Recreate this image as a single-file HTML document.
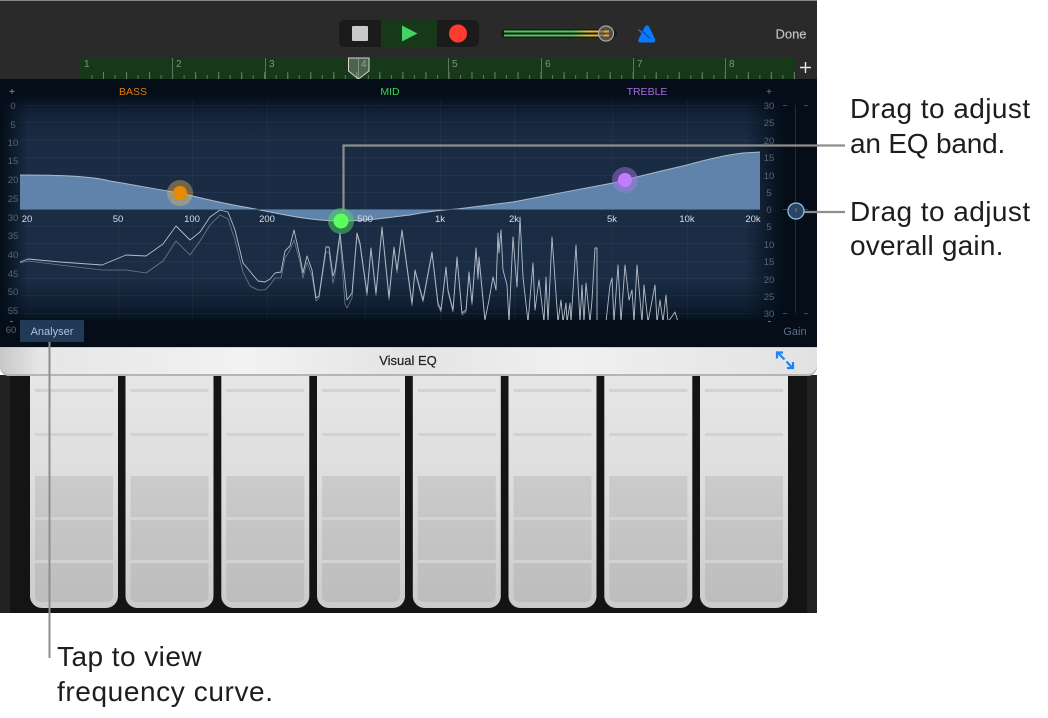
<!DOCTYPE html>
<html><head><meta charset="utf-8"><style>
html,body{margin:0;padding:0;background:#fff;width:1048px;height:718px;overflow:hidden}
svg{display:block;font-family:"Liberation Sans",sans-serif}
.l{font-size:9.5px;fill:#566679;text-anchor:middle}
.f{font-size:9.5px;fill:#d5dde6;text-anchor:middle}
.c{font-size:28px;fill:#1d1d1f;letter-spacing:.45px}
.r{font-size:10px;fill:#7f927f}
</style></head><body>
<svg width="1048" height="718" viewBox="0 0 1048 718" xmlns="http://www.w3.org/2000/svg">
<defs>
<linearGradient id="g1" x1="0" y1="0" x2="0" y2="1"><stop offset="0" stop-color="#050e1a"/><stop offset=".09" stop-color="#14243a"/><stop offset=".2" stop-color="#1a2c43"/><stop offset=".8" stop-color="#1a2d45"/><stop offset=".92" stop-color="#0f1e30"/><stop offset="1" stop-color="#040d18"/></linearGradient>
<linearGradient id="gl" x1="0" x2="1" y1="0" y2="0"><stop offset="0" stop-color="#040d18"/><stop offset="1" stop-color="#040d18" stop-opacity="0"/></linearGradient>
<linearGradient id="gr" x1="0" x2="1" y1="0" y2="0"><stop offset="0" stop-color="#040d18" stop-opacity="0"/><stop offset="1" stop-color="#040d18"/></linearGradient>
<linearGradient id="bar" x1="0" x2="1" y1="0" y2="0"><stop offset="0" stop-color="#c8c8c8"/><stop offset=".05" stop-color="#e6e6e6"/><stop offset=".2" stop-color="#ededed"/><stop offset=".3" stop-color="#f2f2f2"/><stop offset=".5" stop-color="#e4e4e4"/><stop offset=".7" stop-color="#f0f0f0"/><stop offset="1" stop-color="#e2e2e2"/></linearGradient>
<linearGradient id="k" x1="0" x2="0" y1="0" y2="1"><stop offset="0" stop-color="#e6e6e6"/><stop offset=".45" stop-color="#dedede"/><stop offset="1" stop-color="#cbcbcb"/></linearGradient>
<linearGradient id="ki" x1="0" x2="0" y1="0" y2="1"><stop offset="0" stop-color="#cbcbcb"/><stop offset="1" stop-color="#bdbdbd"/></linearGradient>
<linearGradient id="vol" x1="0" x2="1" y1="0" y2="0"><stop offset="0" stop-color="#46c95c"/><stop offset=".68" stop-color="#4ccb5c"/><stop offset=".85" stop-color="#e8c21e"/><stop offset="1" stop-color="#efaa1a"/></linearGradient>
<clipPath id="sp"><rect x="20" y="190" width="740" height="130"/></clipPath>
<filter id="soft" x="-5%" y="-5%" width="110%" height="110%"><feGaussianBlur stdDeviation=".25"/></filter>
<g id="key">
<path d="M0 0H88V221a12 12 0 0 1-12 12H12a12 12 0 0 1-12-12Z" fill="url(#k)"/>
<rect x="5" y="14" width="78" height="3" fill="#d2d2d2"/>
<rect x="5" y="58" width="78" height="3" fill="#d2d2d2"/>
<path d="M5 101H83V221a6 6 0 0 1-6 6H11a6 6 0 0 1-6-6Z" fill="url(#ki)"/>
<rect x="5" y="142" width="78" height="3" fill="#d3d3d3"/>
<rect x="5" y="185" width="78" height="3" fill="#d3d3d3"/>
</g>
</defs>

<!-- top bar -->
<rect x="0" y="0" width="817" height="80" fill="#2a2a2a"/>
<rect x="0" y="0" width="817" height="1" fill="#8a8a8a"/>

<!-- transport -->
<rect x="339" y="20" width="140" height="27" rx="5" fill="#1b1b1b"/>
<rect x="381" y="20" width="56" height="27" fill="#17391a"/>
<rect x="352" y="26" width="16" height="15" rx="1" fill="#c9c9c9"/>
<path d="M402 25.500L417.500 33.500L402 41.500Z" fill="#44d262"/>
<circle cx="458" cy="33.500" r="9" fill="#ff3b30"/>

<!-- volume -->
<rect x="501" y="29" width="116" height="9" rx="4.500" fill="#1a1a1a"/>
<rect x="504" y="30.500" width="100" height="2" fill="url(#vol)"/>
<rect x="504" y="34.500" width="100" height="2" fill="url(#vol)"/>
<circle cx="606" cy="33.500" r="7.500" fill="#6a6a6a" fill-opacity=".65" stroke="#a8a8a8" stroke-width="1.200"/>
<rect x="604" y="30.500" width="5" height="2" fill="#efaa1a"/>
<rect x="604" y="34.500" width="5" height="2" fill="#efaa1a"/>

<!-- metronome -->
<path d="M645 26.500Q647 24 649 26.500L655 39Q656 42.500 653 42.500H640.500Q637.500 42.500 638.500 39.500L642 32.500Z" fill="#0a7aff"/>
<path d="M641 30L650 38.500" stroke="#0d4a99" stroke-width="1.300"/>
<path d="M638.500 29.500L646.500 37" stroke="#0a7aff" stroke-width="1.200"/>

<text x="791" y="38.500" font-size="13" fill="#c4c4c4" text-anchor="middle" stroke="#c4c4c4" stroke-width=".15">Done</text>

<!-- ruler -->
<rect x="80" y="58" width="715" height="21" fill="#17391a"/>
<line x1="91.500" x2="795" y1="77" y2="77" stroke="#5f7560" stroke-width="4" stroke-dasharray="1 10.515"/>
<line x1="103" x2="795" y1="75.500" y2="75.500" stroke="#6a7f6b" stroke-width="7" stroke-dasharray="1 22.030"/>
<g stroke="#5f7560" stroke-width="1">
<line x1="172.500" x2="172.500" y1="58" y2="79"/><line x1="265.500" x2="265.500" y1="58" y2="79"/><line x1="448.500" x2="448.500" y1="58" y2="79"/><line x1="541.500" x2="541.500" y1="58" y2="79"/><line x1="633.500" x2="633.500" y1="58" y2="79"/><line x1="725.500" x2="725.500" y1="58" y2="79"/>
</g>
<text class="r" x="84" y="67">1</text><text class="r" x="176" y="67">2</text><text class="r" x="269" y="67">3</text><text class="r" x="361" y="67">4</text><text class="r" x="452" y="67">5</text><text class="r" x="545" y="67">6</text><text class="r" x="637" y="67">7</text><text class="r" x="729" y="67">8</text>
<path d="M348.500 58H369V71L358.500 79L348.500 71Z" fill="#c8c8c8" fill-opacity=".3" stroke="#d5d5d5" stroke-width="1"/>
<line x1="358.500" x2="358.500" y1="58" y2="79" stroke="#d5d5d5" stroke-opacity=".4"/>
<path d="M800 67.500H811M805.500 62V73" stroke="#e8e8e8" stroke-width="1.400"/>

<!-- EQ panel -->
<rect x="0" y="79" width="817" height="268" fill="#040d18"/>
<rect x="0" y="95" width="817" height="230" fill="url(#g1)"/>
<g stroke="#fff" stroke-opacity=".04" stroke-width="1">
<line x1="20" x2="760" y1="105.500" y2="105.500"/><line x1="20" x2="760" y1="122.500" y2="122.500"/><line x1="20" x2="760" y1="140.500" y2="140.500"/><line x1="20" x2="760" y1="157.500" y2="157.500"/><line x1="20" x2="760" y1="175.500" y2="175.500"/><line x1="20" x2="760" y1="192.500" y2="192.500"/><line x1="20" x2="760" y1="226.500" y2="226.500"/><line x1="20" x2="760" y1="243.500" y2="243.500"/><line x1="20" x2="760" y1="261.500" y2="261.500"/><line x1="20" x2="760" y1="278.500" y2="278.500"/><line x1="20" x2="760" y1="295.500" y2="295.500"/><line x1="20" x2="760" y1="313.500" y2="313.500"/>
<line x1="118.500" x2="118.500" y1="100" y2="320"/><line x1="192.500" x2="192.500" y1="100" y2="320"/><line x1="267.500" x2="267.500" y1="100" y2="320"/><line x1="365.500" x2="365.500" y1="100" y2="320"/><line x1="440.500" x2="440.500" y1="100" y2="320"/><line x1="514.500" x2="514.500" y1="100" y2="320"/><line x1="612.500" x2="612.500" y1="100" y2="320"/><line x1="687.500" x2="687.500" y1="100" y2="320"/>
</g>
<rect x="0" y="95" width="28" height="230" fill="url(#gl)"/>
<rect x="745" y="95" width="40" height="230" fill="url(#gr)"/>
<rect x="785" y="95" width="32" height="230" fill="#040d18"/>

<!-- curve -->
<path d="M20 175C60 175 90 176 110 181C135 185 160 190 180 193C205 199 225 204 250 208C280 214 310 221 340 221C365 221 385 218 410 215C425 212 440 210 457 209C475 207 495 204 513 202C545 196 580 189 613 183C640 176 665 170 687 165C705 160 725 155 743 153L760 152V209H20Z" fill="#5f83aa"/>
<path d="M20 175C60 175 90 176 110 181C135 185 160 190 180 193C205 199 225 204 250 208C280 214 310 221 340 221C365 221 385 218 410 215C425 212 440 210 457 209C475 207 495 204 513 202C545 196 580 189 613 183C640 176 665 170 687 165C705 160 725 155 743 153L760 152" fill="none" stroke="#a9bbcd" stroke-width="1"/>
<line x1="20" x2="760" y1="209.500" y2="209.500" stroke="#3f5f83" stroke-width="1"/>

<!-- spectrum -->
<g clip-path="url(#sp)">
<g fill="none" stroke-linejoin="round" filter="url(#soft)">
<path d="M20 263L28 261L60 265L102 270L126 270L146 273L163 261L176 241L190 255L200 241L210 225L220 215L228 219L235 240L243 272L250 286L258 290L265 290L270 285L275 278L281 278L285 258L290 250L294 240L300 262L303 278L307 262L312 276L316 301L319 298L326 252L329 252L333 283L335 275L340 238L345 304L347 308L352 298L357 235L360 246L367 296L371 250L376 296L382 229L389 300L394 249L397 273L402 232L412 306L415 272L423 302L432 254L438 306L441 312L446 269L448 292L453 312L457 259L462 315L466 312L469 274L472 305L476 250L478 280L479 259L485 322" stroke="#6d7b8b" stroke-width=".8"/>
<path d="M20 262L28 259L60 262L102 265L126 255L146 256L163 244L176 226L190 240L200 232L210 217L220 210L228 212L235 230L243 263L258 281L265 282L270 279L275 273L281 272L285 251L290 246L294 230L300 257L303 273L307 256L312 270L316 298L319 296L326 247L329 247L333 276L335 270L340 233L347 300L352 293L357 233L360 243L367 293L371 248L376 293L382 227L389 297L394 247L397 270L402 230L412 303L415 270L423 300L432 252L438 303L441 310L446 267L448 290L453 310L457 257L462 313L466 310L469 272L472 303L476 248L478 278L479 257L485 320L489 300L493 277L496 290L498 233L499 253L501 230L503 270L507 285L509 322L513 237L517 287L520 217L523 277L528 322L533 263L535 310L539 280L544 322L546 277L548 322L552 237L558 322L561 300L563 322L566 303L567 322L570 303L571 322L576 245L580 322L582 285L584 322L586 283L590 322L592 300L595 248H597V322L606 322L610 285L612 278L614 322L618 265L621 322L625 265L629 300L632 290L634 322L637 265L642 322L644 285L648 322L655 285L657 322L660 300L663 322L666 295L668 322L675 312L678 322" stroke="#b4bdc8" stroke-width=".9"/>
</g>
</g>
<rect x="20" y="320" width="740" height="6" fill="#040d18"/>

<!-- band labels -->
<text x="133" y="95" font-size="10.500" fill="#e08000" text-anchor="middle">BASS</text>
<text x="390" y="95" font-size="10.500" fill="#3fd34f" text-anchor="middle">MID</text>
<text x="647" y="95" font-size="10.500" fill="#a66ce0" text-anchor="middle">TREBLE</text>
<text x="12" y="95" font-size="10" fill="#8a9db3" text-anchor="middle">+</text>
<text x="769" y="95" font-size="10" fill="#6a7d93" text-anchor="middle">+</text>

<!-- left scale -->
<text class="l" x="13" y="109">0</text><text class="l" x="13" y="128">5</text><text class="l" x="13" y="146">10</text><text class="l" x="13" y="164">15</text><text class="l" x="13" y="183">20</text><text class="l" x="13" y="202">25</text><text class="l" x="13" y="221">30</text><text class="l" x="13" y="239">35</text><text class="l" x="13" y="258">40</text><text class="l" x="13" y="277">45</text><text class="l" x="13" y="295">50</text><text class="l" x="13" y="314">55</text><text class="l" x="11" y="333">60</text>
<rect x="10" y="321" width="3" height="1" fill="#5f7087"/>
<!-- right scale -->
<text class="l" x="769" y="109">30</text><text class="l" x="769" y="126">25</text><text class="l" x="769" y="144">20</text><text class="l" x="769" y="161">15</text><text class="l" x="769" y="179">10</text><text class="l" x="769" y="196">5</text><text class="l" x="769" y="213">0</text><text class="l" x="769" y="230">5</text><text class="l" x="769" y="248">10</text><text class="l" x="769" y="265">15</text><text class="l" x="769" y="283">20</text><text class="l" x="769" y="300">25</text><text class="l" x="769" y="317">30</text>
<rect x="768" y="321" width="3" height="1" fill="#5f7087"/>

<!-- freq labels -->
<text class="f" x="27" y="222">20</text><text class="f" x="118" y="222">50</text><text class="f" x="192" y="222">100</text><text class="f" x="267" y="222">200</text><text class="f" x="365" y="222">500</text><text class="f" x="440" y="222">1k</text><text class="f" x="514" y="222">2k</text><text class="f" x="612" y="222">5k</text><text class="f" x="687" y="222">10k</text><text class="f" x="753" y="222">20k</text>

<!-- gain -->
<line x1="795.500" x2="795.500" y1="105" y2="313" stroke="#1c2c3e"/>
<g fill="#3c4b5c">
<rect x="783" y="105" width="4" height="1"/><rect x="804" y="105" width="4" height="1"/>
<rect x="783" y="209" width="4" height="1"/><rect x="804" y="209" width="4" height="1"/>
<rect x="783" y="313" width="4" height="1"/><rect x="804" y="313" width="4" height="1"/>
</g>
<text x="795" y="335" font-size="11" fill="#5f7087" text-anchor="middle">Gain</text>

<!-- analyser -->
<rect x="20" y="320" width="64" height="22" rx="1" fill="#223a57"/>
<text x="52" y="335" font-size="11" fill="#a8c4e0" text-anchor="middle">Analyser</text>

<!-- keys area -->
<rect x="0" y="375" width="817" height="238" fill="#141414"/>
<rect x="0" y="375" width="10" height="238" fill="#222"/>
<rect x="807" y="375" width="10" height="238" fill="#222"/>
<use href="#key" x="30" y="375"/><use href="#key" x="125.500" y="375"/><use href="#key" x="221.300" y="375"/><use href="#key" x="317" y="375"/><use href="#key" x="412.800" y="375"/><use href="#key" x="508.500" y="375"/><use href="#key" x="604.300" y="375"/><use href="#key" x="700" y="375"/>

<!-- visual EQ bar -->
<path d="M0 347H817V367a9 9 0 0 1-9 9H9a9 9 0 0 1-9-9Z" fill="#b5b5b5"/>
<path d="M0 347.500H817V365a9 9 0 0 1-9 9H9a9 9 0 0 1-9-9Z" fill="url(#bar)"/>
<text x="408" y="365" font-size="13" fill="#222" text-anchor="middle" stroke="#222" stroke-width=".2">Visual EQ</text>
<g stroke="#1a84ff" stroke-width="2.200" fill="none">
<path d="M778 353L784.500 359.500"/>
<path d="M777 358.500V352.500H783"/>
<path d="M792 367.500L786.500 361.500"/>
<path d="M793 362V368H787"/>
</g>

<!-- annotation lines -->
<g stroke="#8e8e8e" fill="none">
<path d="M343.500 212V145.500H845" stroke-width="2.200"/>
<path d="M804 212H845" stroke-width="2.200"/>
<path d="M49.500 342V658" stroke-width="2"/>
</g>

<!-- nodes -->
<circle cx="180" cy="193" r="13" fill="#e6b45a" fill-opacity=".42"/>
<circle cx="180" cy="193" r="7" fill="#e88a00"/>
<circle cx="341" cy="221" r="13" fill="#4cd964" fill-opacity=".5"/>
<circle cx="341" cy="221" r="7.500" fill="#5cff5c"/>
<circle cx="625" cy="180" r="13" fill="#a878e8" fill-opacity=".45"/>
<circle cx="625" cy="180" r="7" fill="#c47cff"/>

<!-- gain handle -->
<circle cx="796" cy="211" r="8" fill="#2c4460" stroke="#8cc0ee" stroke-width="1.300"/>
<line x1="796" x2="796" y1="208" y2="212" stroke="#6d8096"/>

<!-- callouts -->
<text class="c" x="850" y="118">Drag to adjust</text>
<text class="c" x="850" y="153" style="letter-spacing:-.2px">an EQ band.</text>
<text class="c" x="850" y="221">Drag to adjust</text>
<text class="c" x="850" y="255" style="letter-spacing:.2px">overall gain.</text>
<text class="c" x="57" y="666">Tap to view</text>
<text class="c" x="57" y="701" style="letter-spacing:.6px">frequency curve.</text>
</svg>
</body></html>
